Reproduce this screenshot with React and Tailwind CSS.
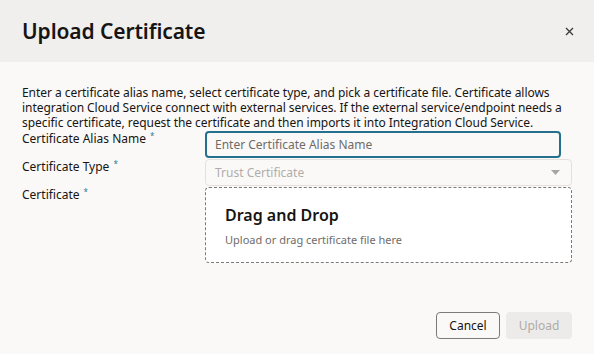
import React from 'react';

const Req = () => <span className="relative top-[1px] ml-1 align-top text-[8px] leading-none text-[#2b7a99]">*</span>;

export default function App() {
  return (
    <div className="w-[594px] h-[354px] bg-[#fbf9f8] flex flex-col text-[#161513]" style={{ fontFamily: '"Noto Sans", sans-serif' }}>
      {/* header */}
      <div className="h-[62px] bg-[#f1efed] flex items-center justify-between pl-[22px] pr-[15px] shrink-0">
        <h1 className="text-[21px] font-semibold tracking-[-0.1px] leading-none pt-[1px]">Upload Certificate</h1>
        <button className="w-[20px] h-[20px] flex items-center justify-center text-[#3b3936]">
          <svg width="9" height="9" viewBox="0 0 9 9" fill="none" stroke="currentColor" strokeWidth="1.3">
            <path d="M1 1l7 7M8 1L1 8" />
          </svg>
        </button>
      </div>

      {/* body */}
      <div className="flex-1 px-[22px] pt-[23px]">
        <p className="text-[12px] leading-[15px] tracking-[-0.05px] w-[560px]">
          Enter a certificate alias name, select certificate type, and pick a certificate file. Certificate allows integration Cloud Service connect with external services. If the external service/endpoint needs a specific certificate, request the certificate and then imports it into Integration Cloud Service.
        </p>

        <div className="grid grid-cols-[183px_1fr] gap-y-[1px] text-[12px] leading-[16px] mt-[1px]">
          <div>Certificate Alias Name<Req /></div>
          <div className="pr-[11px]">
            <div className="h-[27px] border-2 border-[#24708e] rounded-[4px] flex items-center px-[8px] text-[#6f6c69]">Enter Certificate Alias Name</div>
          </div>

          <div>Certificate Type<Req /></div>
          <div className="h-[27px] border border-[#e4e1dd] rounded-[4px] flex items-center justify-between pl-[9px] pr-[11px] text-[#b0ada9]">
            <span>Trust Certificate</span>
            <svg width="9" height="5" viewBox="0 0 9 5"><path d="M0 0h9L4.5 5z" fill="#a8a5a1" /></svg>
          </div>

          <div>Certificate<Req /></div>
          <div className="h-[76px] border border-dashed border-[#7c7976] rounded-[4px] bg-white flex flex-col justify-center pl-[19px] pt-[2px]">
            <div className="text-[16px] font-semibold leading-[20px]">Drag and Drop</div>
            <div className="text-[11px] text-[#6f6c69] mt-[8px] leading-[14px]">Upload or drag certificate file here</div>
          </div>
        </div>

        <div className="flex justify-end gap-[6px] mt-[49px]">
          <button className="h-[27px] w-[64px] border border-[#7c7976] rounded-[4px] text-[12px] text-[#161513] bg-[#fbf9f8]">Cancel</button>
          <button className="h-[27px] w-[66px] rounded-[4px] text-[12px] text-[#aeaba7] bg-[#edebe9]">Upload</button>
        </div>
      </div>
    </div>
  );
}
